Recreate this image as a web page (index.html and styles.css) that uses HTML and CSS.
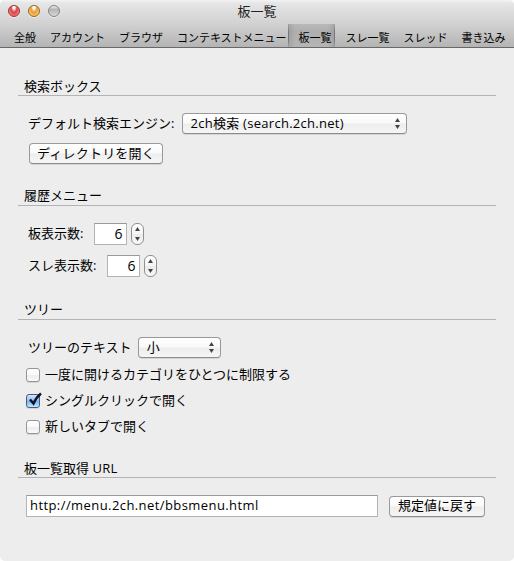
FILE: index.html
```html
<!DOCTYPE html>
<html lang="ja">
<head>
<meta charset="utf-8">
<title>板一覧</title>
<link rel="stylesheet" href="styles.css">
</head>
<body>
<div class="window">
  <header class="toolbar">
    <div class="titlebar">
      <div class="lights"><i class="light red"></i><i class="light amber"></i><i class="light gray"></i></div>
      <h1>板一覧</h1>
    </div>
    <nav class="tabs">
      <a>全般</a><a>アカウント</a><a>ブラウザ</a><a>コンテキストメニュー</a><a class="active">板一覧</a><a>スレ一覧</a><a>スレッド</a><a>書き込み</a>
    </nav>
  </header>
  <main>
    <section class="search">
      <h2>検索ボックス</h2>
      <div class="row">
        <span class="label">デフォルト検索エンジン:</span>
        <div class="control popup engine"><span class="latin">2ch検索 (search.2ch.net)</span><svg class="arrows" width="7" height="13" viewBox="0 0 7 13"><path d="M3.5 1 6 5H1zM3.5 12 1 8h5z"/></svg></div>
      </div>
      <div class="control button open">ディレクトリを開く</div>
    </section>
    <section class="history">
      <h2>履歴メニュー</h2>
      <div class="row">
        <span class="label">板表示数:</span>
        <div class="field number">6</div>
        <div class="stepper"><svg width="13" height="22" viewBox="0 0 13 22"><path d="M6.5 4 9 8H4zM6.5 18 4 14h5z"/></svg></div>
      </div>
      <div class="row">
        <span class="label">スレ表示数:</span>
        <div class="field number">6</div>
        <div class="stepper"><svg width="13" height="22" viewBox="0 0 13 22"><path d="M6.5 4 9 8H4zM6.5 18 4 14h5z"/></svg></div>
      </div>
    </section>
    <section class="tree">
      <h2>ツリー</h2>
      <div class="row">
        <span class="label">ツリーのテキスト</span>
        <div class="control popup size"><span>小</span><svg class="arrows" width="7" height="13" viewBox="0 0 7 13"><path d="M3.5 1 6 5H1zM3.5 12 1 8h5z"/></svg></div>
      </div>
      <div class="check"><i class="box"></i><span>一度に開けるカテゴリをひとつに制限する</span></div>
      <div class="check"><i class="box on"><svg width="16" height="15" viewBox="0 0 16 15"><path d="M3 7.5 6.5 11.5Q9.5 5 14 1.5"/></svg></i><span>シングルクリックで開く</span></div>
      <div class="check"><i class="box"></i><span>新しいタブで開く</span></div>
    </section>
    <section class="source">
      <h2>板一覧取得 <span class="latin">URL</span></h2>
      <div class="row">
        <div class="field url">http://menu.2ch.net/bbsmenu.html</div>
        <div class="control button reset">規定値に戻す</div>
      </div>
    </section>
  </main>
</div>
</body>
</html>
```
FILE: styles.css
```css
* { box-sizing: border-box; }
body {
  margin: 0;
  background: #fff;
  color: #000;
  font: 13px/20px "Open Sans", "Noto Sans CJK JP", sans-serif;
  white-space: nowrap;
}
.window {
  width: 514px;
  height: 561px;
  background: #ededed;
  border-radius: 5px;
  overflow: hidden;
}
.toolbar {
  height: 48px;
  border-bottom: 1px solid #686868;
  background: linear-gradient(#f4f4f4, #e6e6e6 3px, #d0d0d0 25px, #b4b4b4);
}
.titlebar { display: grid; height: 24px; grid-template-columns: 60px 394px 60px; }
.lights { display: flex; gap: 8px; padding: 5px 0 0 8px; }
.light {
  width: 12px;
  height: 12px;
  border-radius: 50%;
  border: 1px solid #777;
  box-shadow: 0 1px 0 #eee;
}
.red { background: radial-gradient(ellipse at 50% 10%, #fff 0 12%, #d9444a 42%, #fb6b69 70%, #ffb5ae); border-color: #8b393c; }
.amber { background: radial-gradient(ellipse at 50% 10%, #fff 0 12%, #e69b37 42%, #fbc050 70%, #fff09a); border-color: #93642f; }
.gray { background: linear-gradient(#eee, #b5b5b5 35%, #d9d9d9); border-color: #838383; }
h1 { margin: 0; padding-top: 1px; text-align: center; font-size: 13px; font-weight: 400; line-height: 20px; color: #222; }
.tabs { display: flex; height: 23px; padding: 0 0 0 7px; font-size: 11px; line-height: 27px; }
.tabs a { flex: none; padding: 0 7px; letter-spacing: -.01px; }
.tabs a.active {
  margin: 0 3px 0 -5px;
  padding: 0 4px 0 10px;
  background:
    linear-gradient(#7770, #777 35%, #777 70%, #7770) left / 1px 100% no-repeat,
    linear-gradient(#7770, #777 35%, #777 70%, #7770) right / 1px 100% no-repeat,
    linear-gradient(90deg, #5553, transparent 15%, transparent 85%, #5553),
    linear-gradient(#b9b9b9, #aeaeae 35%, #b5b5b5);
}
main { padding: 28px 18px 0; }
h2 { margin: 0; height: 20px; padding-left: 6px; border-bottom: 1px solid #b3b3b3; font-size: 13px; font-weight: 400; line-height: 20px; }
.history h2, .tree h2 { line-height: 18px; }
.row { display: flex; align-items: center; height: 22px; }
.label { padding: 0 0 2px 10px; }
.search { height: 110px; }
.history { height: 114px; }
.tree { height: 158px; }
.search .row, .history .row, .tree .row, .source .row { margin-top: 17px; }
.control {
  height: 21px;
  border: 1px solid #999;
  border-bottom-color: #8c8c8c;
  border-radius: 4px;
  background: linear-gradient(#fff, #f9f9f9 48%, #ededed 52%, #f6f6f6);
  box-shadow: 0 1px 0 #d5d5d5;
  line-height: 18px;
}
.row .control { line-height: 17px; }
.popup { display: flex; align-self: flex-start; justify-content: space-between; align-items: center; padding: 0 5px 0 8px; }
.popup span { padding-bottom: 1px; }
.arrows { fill: #444; }
.search .engine { width: 225px; margin-left: 8px; padding-left: 7px; }
.size { width: 83px; margin-left: 6px; }
.button { text-align: center; }
.open { width: 134px; margin: 8px 0 0 11px; letter-spacing: .2px; }
.history .row + .row { margin-top: 10px; }
.field { height: 22px; border: 1px solid #b3b3b3; border-top-color: #999; background: #fff; line-height: 20px; }
.number { width: 33px; margin-left: 11px; padding-right: 4px; text-align: right; font-size: 14px; }
.stepper { width: 13px; height: 22px; margin-left: 4px; border: 1px solid #919191; border-radius: 6px; background: linear-gradient(#fff, #f5f5f5 48%, #eaeaea 52%, #fafafa); }
.stepper svg { display: block; margin: -1px; fill: #444; }
.check { display: flex; align-items: center; height: 26px; padding-left: 8px; gap: 5px; }
.check span { padding-bottom: 2px; }
.tree .row + .check { margin-top: 3px; }
.box { position: relative; width: 14px; height: 14px; border: 1px solid #959595; border-radius: 3px; background: linear-gradient(#fff, #f8f8f8 50%, #ededed 55%, #fafafa); box-shadow: 0 1px 0 #d5d5d5; }
.on { border-color: #4b5980; background: linear-gradient(#d5e7fa, #8dbdf0 50%, #78b5ee 55%, #c0ebfe); }
.on svg { position: absolute; left: 0; top: -3px; fill: none; stroke: #10152b; stroke-width: 2.5; }
.url { width: 352px; margin-left: 8px; padding-left: 3px; letter-spacing: .42px; line-height: 19px; }
.reset { align-self: flex-end; width: 96px; margin-left: 11px; }
.latin { letter-spacing: .28px; }
```
